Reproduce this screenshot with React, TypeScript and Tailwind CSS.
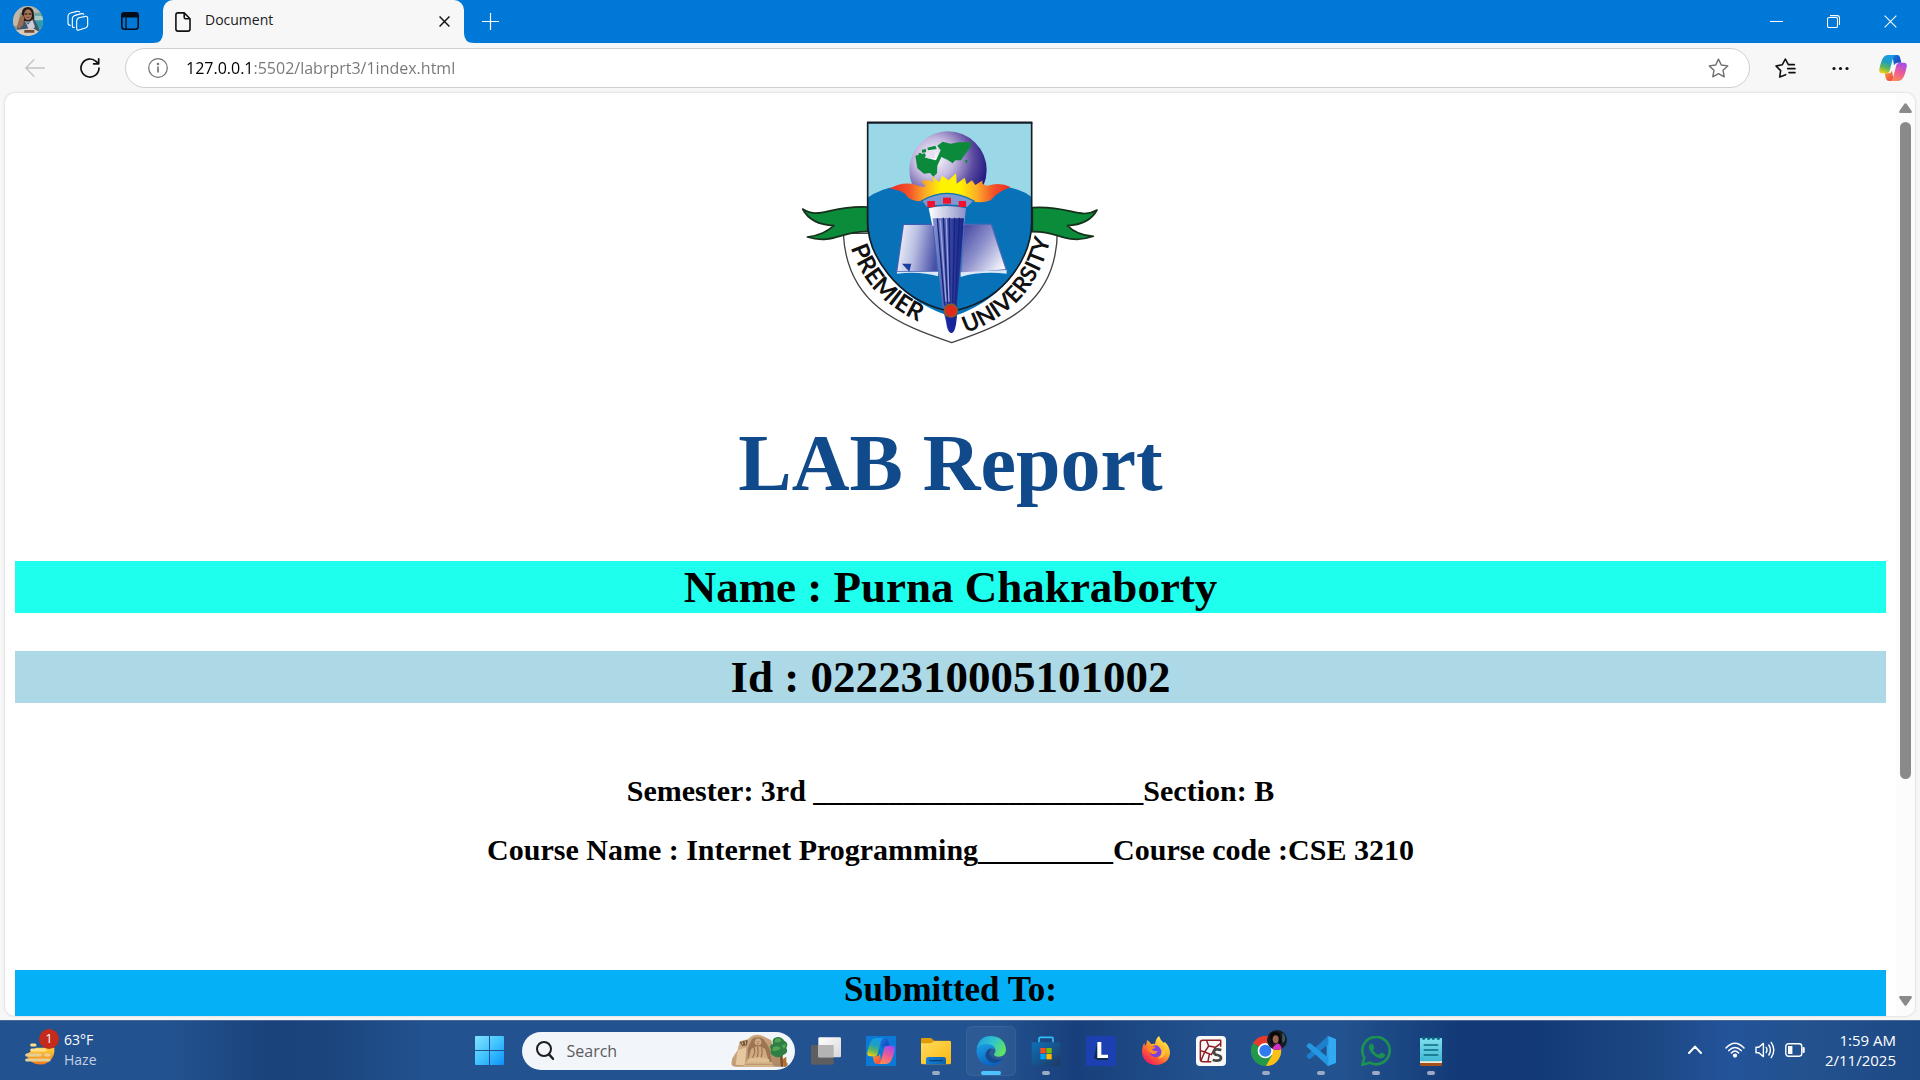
import React from "react";

const SERIF = "font-['Liberation_Serif',serif]";
const SANS = "font-['Open_Sans','Noto_Sans',sans-serif]";

function Avatar() {
  return (
    <svg width="30" height="30" viewBox="0 0 90 90" aria-hidden="true">
      <defs>
        <clipPath id="avatarClip"><circle cx="45" cy="45" r="45" /></clipPath>
      </defs>
      <g clipPath="url(#avatarClip)">
        <rect width="90" height="90" fill="#8f938c" />
        <rect width="90" height="22" fill="#b9b8ae" />
        <rect y="20" width="20" height="40" fill="#c3b8a5" />
        <path d="M58 20h32v50H62z" fill="#6fa6a4" />
        <path d="M66 30h24v12H66z" fill="#a8c9c6" />
        <path d="M70 44h20v22H70z" fill="#2e9bab" />
        <path d="M26 22Q28 3 45 3Q64 5 63 30L62 46H30z" fill="#241a1a" />
        <ellipse cx="45" cy="26" rx="12" ry="16" fill="#a5765a" />
        <path d="M35 22h8v4h-8zM47 22h8v4h-8z" fill="#3a2723" />
        <path d="M40 33q5 4 10 0" stroke="#5e2c25" strokeWidth="2" fill="none" />
        <path d="M12 66L28 44L44 52L66 42L80 72L60 84H16z" fill="#3c5871" />
        <path d="M36 44L45 56L58 40L66 64L48 72z" fill="#cfcbd6" />
        <path d="M20 34L30 26L34 36L30 58L18 68L12 60z" fill="#9b6c50" />
        <path d="M8 72L60 66L78 78L60 90H20z" fill="#d8cbbd" />
        <path d="M34 72h30v8H34z" fill="#6d4a3a" />
      </g>
    </svg>
  );
}

function WorkspacesIcon() {
  return (
    <svg width="22" height="22" viewBox="0 0 66 66" fill="none" stroke="#fff" strokeWidth="3.4" strokeLinejoin="round" strokeLinecap="round" aria-hidden="true">
      <path d="M33 24L55 19Q62 18 62 25V46Q62 51 57 53L36 60Q29 62 29 55V33Q29 26 36 23" />
      <path d="M22 52Q16 54 16 47V26Q16 19 22 17L43 11Q49 10 50 13" />
      <path d="M10 46Q3 46 3 39V18Q4 11 10 9L30 4Q36 3 38 6" />
    </svg>
  );
}

function TabActionsIcon() {
  return (
    <svg width="18" height="18" viewBox="0 0 18 18" fill="none" aria-hidden="true">
      <rect x="0.8" y="0.8" width="16.4" height="16.4" rx="2.6" stroke="#050d18" strokeWidth="1.6" />
      <path d="M1 5.6V3Q1 1 3 1h12q2 0 2 2v2.6z" fill="#050d18" />
      <path d="M5 5.5V17" stroke="#050d18" strokeWidth="1.3" />
    </svg>
  );
}

function DocIcon() {
  return (
    <svg width="16" height="20" viewBox="0 0 16 20" fill="none" stroke="#111" strokeWidth="1.6" strokeLinejoin="round" aria-hidden="true">
      <path d="M3 .9h6.2L15 6.7V17q0 2.1-2.1 2.1H3Q.9 19.1.9 17V3Q.9.9 3 .9z" />
      <path d="M9.2 1v4.2q0 1.5 1.5 1.5H15" />
    </svg>
  );
}

function Cross({ size, color, width }: { size: number; color: string; width: number }) {
  return (
    <svg width={size} height={size} viewBox="0 0 12 12" stroke={color} strokeWidth={width} aria-hidden="true">
      <path d="M.6.6l10.8 10.8M11.4.6L.6 11.4" />
    </svg>
  );
}

function Copilot({ size, id }: { size: number; id: string }) {
  const u = (n: string) => `url(#${id}${n})`;
  return (
    <svg width={size} height={size} viewBox="0 0 84 84" aria-hidden="true">
      <defs>
        <linearGradient id={id + "a"} x1=".6" y1="0" x2=".3" y2="1">
          <stop offset="0" stopColor="#159be8" /><stop offset=".4" stopColor="#1f9fbf" /><stop offset=".7" stopColor="#5fb65a" /><stop offset="1" stopColor="#f2ce12" />
        </linearGradient>
        <linearGradient id={id + "b"} x1=".7" y1="0" x2=".3" y2="1">
          <stop offset="0" stopColor="#a04cf0" /><stop offset=".45" stopColor="#e8579f" /><stop offset="1" stopColor="#fb8a56" />
        </linearGradient>
        <linearGradient id={id + "c"} x1="0" y1="0" x2="1" y2="1">
          <stop offset="0" stopColor="#1a7be0" /><stop offset="1" stopColor="#1838b8" />
        </linearGradient>
        <linearGradient id={id + "d"} x1="0" y1="0" x2="1" y2="1">
          <stop offset="0" stopColor="#f9a12c" /><stop offset="1" stopColor="#ee3d4a" />
        </linearGradient>
      </defs>
      <path d="M40 3H55Q61 3 63 10L67 26H56Q48 26 45 34z" fill={u("c")} />
      <path d="M44 81H30Q23 81 21 74L17 58H28Q36 58 39 50z" fill={u("d")} />
      <path d="M26 3H50Q44 6 42 13L32 50Q30 58 21 58H9Q-1 58 1 46Q5 24 12 12Q17 3 26 3z" fill={u("a")} />
      <path d="M58 81H34Q40 78 42 71L52 34Q54 26 63 26H75Q85 26 83 38Q79 60 72 72Q67 81 58 81z" fill={u("b")} />
    </svg>
  );
}

function UniversityCrest() {
  return (
    <svg width="320" height="250" viewBox="3 0 960 750" role="img" aria-label="Premier University crest">
      <defs>
        <radialGradient id="globe" cx=".32" cy=".35" r=".75">
          <stop offset="0" stopColor="#fff" /><stop offset=".35" stopColor="#c3b8de" /><stop offset=".68" stopColor="#5b4aa0" /><stop offset="1" stopColor="#15107c" />
        </radialGradient>
        <linearGradient id="fire" x1="0" y1="0" x2="1" y2="0">
          <stop offset="0" stopColor="#ee2a22" /><stop offset=".16" stopColor="#f3502a" /><stop offset=".3" stopColor="#fcae28" /><stop offset=".42" stopColor="#fff200" /><stop offset=".58" stopColor="#fff200" /><stop offset=".72" stopColor="#fcae28" /><stop offset=".86" stopColor="#f3502a" /><stop offset="1" stopColor="#ee2a22" />
        </linearGradient>
        <linearGradient id="pageL" x1="0" y1=".3" x2="1" y2=".5">
          <stop offset="0" stopColor="#f2f4fc" /><stop offset=".45" stopColor="#b9bfe2" /><stop offset="1" stopColor="#4a50a8" />
        </linearGradient>
        <linearGradient id="pageR" x1="0" y1="0" x2="1" y2=".8">
          <stop offset="0" stopColor="#3c3f9c" /><stop offset=".5" stopColor="#8f92cc" /><stop offset="1" stopColor="#fafaff" />
        </linearGradient>
        <linearGradient id="torch" x1="0" y1="0" x2="1" y2="0">
          <stop offset="0" stopColor="#8d97d0" /><stop offset=".4" stopColor="#4b59b0" /><stop offset=".7" stopColor="#27379a" /><stop offset="1" stopColor="#1a2489" />
        </linearGradient>
        <linearGradient id="cup" x1="0" y1="0" x2="1" y2="0">
          <stop offset="0" stopColor="#fff" /><stop offset="1" stopColor="#8a8fc8" />
        </linearGradient>
        <clipPath id="shield"><path d="M233 52H725V350C725 450 650 585 485 635C320 585 233 450 233 350z" /></clipPath>
        <path id="arcL" d="M182 428C222 545 300 622 440 672" />
        <path id="arcR" d="M528 684C655 640 752 548 784 390" />
      </defs>
      <path d="M160 385C170 600 330 660 485 713C640 660 800 600 802 380L700 380L240 385z" fill="#fff" stroke="#444" strokeWidth="4" />
      <g fill="#0a8c3a" stroke="#17301c" strokeWidth="5" strokeLinejoin="round">
        <path d="M38 312C90 345 120 300 233 306V380C160 375 130 420 52 396C90 392 110 380 132 362C90 360 55 345 38 312z" />
        <path d="M921 315C870 345 835 300 727 308V380C800 375 830 422 910 394C870 392 850 380 832 362C870 360 905 345 921 315z" />
      </g>
      <g clipPath="url(#shield)">
        <rect x="230" y="50" width="500" height="600" fill="#9ad8e8" />
        <path d="M230 280Q270 250 320 245H650Q700 255 730 280V650H230z" fill="#0872b8" />
      </g>
      <circle cx="474" cy="195" r="116" fill="url(#globe)" />
      <g fill="#0c8a3c">
        <path d="M376 152L404 145L412 160L438 166L452 136L442 122L458 110L482 116L506 112L545 112L540 128L525 148L513 166L496 166L488 175L472 164L454 156L442 182L441 205L430 215L420 204L402 206L382 190z" />
        <path d="M396 134L408 132V142L396 143zM412 128L436 122L440 132L414 136zM386 144h8v6h-8zM526 165h6v8h-6z" />
      </g>
      <path d="M404 158L436 160L434 140L414 140z" fill="#e6e0f2" />
      <path d="M298 252Q335 230 372 238Q390 248 408 244L392 228Q415 222 430 232L426 214L448 232L456 212L476 226Q490 212 498 205L500 236L524 218L530 238L546 226L556 240L578 226Q572 240 592 242Q630 230 662 246Q620 262 602 286Q575 296 545 288Q470 250 400 288Q360 292 345 266Q325 252 298 252z" fill="url(#fire)" />
      <path d="M340 358H430L443 500L320 500z" fill="url(#pageL)" stroke="#3d5fb1" strokeWidth="4" />
      <path d="M522 358H604L649 494L512 508z" fill="url(#pageR)" stroke="#4b6ab8" strokeWidth="4" />
      <path d="M320 500H445L444 514Q390 498 322 506zM512 502L650 495V506Q570 498 512 516z" fill="#dce8f6" />
      <path d="M336 476L364 476L358 500z" fill="#1d3ea0" />
      <path d="M410 308L394 288Q470 242 552 288L532 308Q470 292 410 308z" fill="#7d97d2" stroke="#0a72b0" strokeWidth="4" />
      <g fill="#f3122b"><rect x="412" y="288" width="23" height="19" /><rect x="459" y="278" width="24" height="18" /><rect x="506" y="288" width="22" height="18" /></g>
      <path d="M416 310Q470 296 528 310L522 362H427z" fill="url(#cup)" />
      <path d="M428 340H522L500 610Q498 684 484 684Q472 684 468 650L458 610z" fill="url(#torch)" />
      <path d="M466 600H502Q501 684 484 684Q468 680 466 600z" fill="#16259c" />
      <g stroke="#19247f" strokeWidth="4" fill="none">
        <path d="M442 340L464 600M460 338L473 596M478 338L480 598M494 338L488 594M508 338L496 596" />
      </g>
      <path d="M451 345L468 590M469 342L477 590" stroke="#9ba6da" strokeWidth="4" />
      <path d="M233 52V350C233 450 320 580 463 615M503 615C650 580 725 450 725 350V52" fill="none" stroke="#151c24" strokeWidth="5" />
      <circle cx="483" cy="617" r="19" fill="#e22a1c" stroke="#8b5a2b" strokeWidth="5" />
      <path d="M231 53H727" stroke="#151c24" strokeWidth="7" />
      <g fontFamily="Lato, sans-serif" fill="#111">
        <text fontSize="72"><textPath href="#arcL">PREMIER</textPath></text>
        <text fontSize="68"><textPath href="#arcR">UNIVERSITY</textPath></text>
      </g>
    </svg>
  );
}

function HazeIcon() {
  return (
    <svg width="36" height="38" viewBox="0 0 108 114" aria-hidden="true">
      <defs>
        <linearGradient id="sun" x1="0" y1="0" x2="0" y2="1"><stop offset="0" stopColor="#ffd23a" /><stop offset="1" stopColor="#ee7a1c" /></linearGradient>
      </defs>
      <path d="M10 70A43 43 0 0 0 94 62V50H40z" fill="url(#sun)" />
      <g strokeLinecap="round" strokeWidth="9" fill="none">
        <path d="M26 42H36M26 57H66" stroke="#ffe08a" />
        <path d="M11 72H52M68 72H78M11 87H78" stroke="#e7cf93" />
      </g>
    </svg>
  );
}

function StatueArt() {
  return (
    <svg width="58" height="34" viewBox="0 0 174 102" aria-hidden="true">
      <defs>
        <linearGradient id="rock" x1="0" y1="0" x2="1" y2="1"><stop offset="0" stopColor="#d9b48a" /><stop offset="1" stopColor="#a98360" /></linearGradient>
      </defs>
      <path d="M2 92Q0 76 8 66L20 48L26 22L50 16L62 6Q82-2 100 8L120 18L134 60L170 88Q172 98 160 98H14Q4 98 2 92z" fill="url(#rock)" />
      <path d="M50 96V44L62 16Q80 2 98 16L116 44L124 96z" fill="#9c7654" />
      <path d="M26 24L50 18L48 34L34 36z" fill="#6f5138" />
      <path d="M32 22l4 10M42 20l2 12" stroke="#d9b48a" strokeWidth="3" />
      <path d="M20 48L46 40L42 94L14 92z" fill="#e6c9a0" />
      <circle cx="81" cy="24" r="10" fill="#d3ac82" />
      <path d="M73 14Q81 2 89 14z" fill="#b18a64" />
      <path d="M76 23h3M83 23h3M78 29h6" stroke="#7d5a3c" strokeWidth="2" />
      <path d="M60 46Q81 28 102 46L112 76H52z" fill="#d0a97e" />
      <path d="M70 40Q76 54 64 74M80 38Q84 56 78 72M92 40Q96 56 90 72" stroke="#8c6747" strokeWidth="3" fill="none" />
      <path d="M50 76Q81 64 114 76L116 84H48z" fill="#e0be93" />
      <path d="M42 84H122L130 98H36z" fill="#d6b48a" />
      <path d="M42 91H126" stroke="#a98560" strokeWidth="2" />
      <path d="M146 60L150 98H156L155 60z" fill="#7e4d26" />
      <path d="M154 76l12-8v30h-6z" fill="#b06f2e" />
      <path d="M130 12Q148 4 160 20Q174 26 166 42Q174 56 158 62Q146 74 132 68Q114 62 120 46Q112 34 126 30Q122 18 130 12z" fill="#2f7f45" />
      <path d="M134 14Q146 10 152 20Q142 28 130 24zM126 40Q140 32 150 42Q140 54 124 50zM152 34l12-4q2 10-6 14z" fill="#55a554" />
    </svg>
  );
}

function StartIcon() {
  return (
    <svg width="29" height="29" viewBox="0 0 29 29" aria-hidden="true">
      <defs><linearGradient id="win" gradientUnits="userSpaceOnUse" x1="0" y1="0" x2="29" y2="29"><stop offset="0" stopColor="#84e1ff" /><stop offset=".5" stopColor="#41c3ff" /><stop offset="1" stopColor="#0a93f8" /></linearGradient></defs>
      <path d="M1 0h13v14H0V1q0-1 1-1zM15 0h13q1 0 1 1v13H15zM0 15h14v14H1q-1 0-1-1zM15 15h14v13q0 1-1 1H15z" fill="url(#win)" />
    </svg>
  );
}

function TaskViewIcon() {
  return (
    <svg width="30" height="30" viewBox="0 0 90 90" aria-hidden="true">
      <defs><linearGradient id="tv" x1="0" y1="0" x2="1" y2="1"><stop offset="0" stopColor="#fff" /><stop offset="1" stopColor="#d8d8d8" /></linearGradient></defs>
      <rect y="27" width="68" height="59" rx="4" fill="#5e5e60" />
      <rect x="22" y="4" width="68" height="60" rx="4" fill="url(#tv)" />
      <rect x="22" y="27" width="46" height="37" fill="#b4b4b4" />
    </svg>
  );
}

function CopilotTile() {
  return <span className="flex size-[30px] items-center justify-center bg-[#0b7ad6]"><Copilot size={28} id="tile" /></span>;
}

function ExplorerIcon() {
  return (
    <svg width="30" height="30" viewBox="0 0 90 90" aria-hidden="true">
      <defs>
        <linearGradient id="fold" x1="0" y1="0" x2="1" y2="1"><stop offset="0" stopColor="#ffdc5e" /><stop offset="1" stopColor="#fbb70f" /></linearGradient>
        <linearGradient id="foldBlue" x1="0" y1="0" x2="1" y2="0"><stop offset="0" stopColor="#1180d8" /><stop offset="1" stopColor="#0f63b0" /></linearGradient>
      </defs>
      <path d="M0 10Q0 6 4 6H30L40 14H86Q90 14 90 20V40H0z" fill="#e09c06" />
      <path d="M0 22H30L40 15H86Q90 15 90 20V80Q90 85 85 85H5Q0 85 0 80z" fill="url(#fold)" />
      <path d="M15 85V70Q15 63 22 63H68Q75 63 75 70V85z" fill="url(#foldBlue)" />
      <path d="M26 74H64" stroke="#0b4379" strokeWidth="4" strokeLinecap="round" />
    </svg>
  );
}

function EdgeIcon() {
  return (
    <svg width="30" height="30" viewBox="0 0 90 90" aria-hidden="true">
      <defs>
        <linearGradient id="edgeTop" x1="0" y1=".2" x2="1" y2=".6"><stop offset="0" stopColor="#1d9fdc" /><stop offset=".5" stopColor="#2fc3cf" /><stop offset="1" stopColor="#62e45e" /></linearGradient>
        <linearGradient id="edgeBody" x1="0" y1="0" x2=".4" y2="1"><stop offset="0" stopColor="#1aa0e6" /><stop offset="1" stopColor="#0c62bd" /></linearGradient>
      </defs>
      <path d="M2 38Q8 0 46 0Q88 4 90 42Q88 62 68 62Q54 62 54 54Q60 48 58 40Q54 26 36 26Q14 26 2 38z" fill="url(#edgeTop)" />
      <path d="M1 42Q10 24 32 24Q54 26 57 42Q48 34 38 40Q28 48 34 62Q44 78 66 74Q76 72 83 67Q72 90 45 90Q4 88 1 42z" fill="url(#edgeBody)" />
      <path d="M33 44Q24 56 32 68Q40 80 58 80Q74 78 83 67Q74 72 62 70Q42 66 40 52Q40 42 46 37Q38 38 33 44z" fill="#164a8c" />
    </svg>
  );
}

function StoreIcon() {
  return (
    <svg width="30" height="30" viewBox="0 0 90 90" aria-hidden="true">
      <defs><linearGradient id="store" x1="0" y1="0" x2="1" y2="1"><stop offset="0" stopColor="#0e70b8" /><stop offset="1" stopColor="#1f3763" /></linearGradient></defs>
      <path d="M24 20V8Q24 4 28 4H62Q66 4 66 8V20" fill="none" stroke="#34bdf5" strokeWidth="5" />
      <path d="M2 19H88V80Q88 90 78 90H12Q2 90 2 80z" fill="url(#store)" />
      <path d="M28 36h16v16H28z" fill="#f25022" /><path d="M46 36h16v16H46z" fill="#7fba00" />
      <path d="M28 54h16v16H28z" fill="#00a4ef" /><path d="M46 54h16v16H46z" fill="#ffb900" />
    </svg>
  );
}

function LTile() {
  return (
    <svg width="30" height="30" viewBox="0 0 90 90" aria-hidden="true">
      <rect width="90" height="90" fill="#1c3fb2" />
      <path d="M34 18L24 66L34 72H66V66H34z" fill="#0c2c4e" />
      <path d="M34 18H46V56H66V66H34z" fill="#fff" />
    </svg>
  );
}

function FirefoxIcon() {
  return (
    <svg width="30" height="30" viewBox="0 0 90 90" aria-hidden="true">
      <defs>
        <linearGradient id="ffx" x1=".85" y1=".1" x2=".2" y2="1"><stop offset="0" stopColor="#fff04a" /><stop offset=".35" stopColor="#ffb02c" /><stop offset=".7" stopColor="#ff5038" /><stop offset="1" stopColor="#e8156d" /></linearGradient>
      </defs>
      <path d="M54 0Q58 12 68 20L72 18Q88 34 87 52Q82 86 45 87Q8 84 3 50Q3 30 10 20L12 30Q18 24 18 12Q26 16 30 24Q38 22 42 24Q44 8 54 0z" fill="url(#ffx)" />
      <circle cx="44" cy="46" r="18" fill="#7a42e4" />
      <path d="M20 30Q34 28 44 34Q38 40 32 40Q38 48 50 44Q46 56 34 54Q20 48 20 30z" fill="#ff8a22" />
      <path d="M48 26Q62 32 64 46Q70 40 64 28Q70 32 74 44Q74 66 50 68Q64 60 62 46Q58 34 48 26z" fill="#ffc531" />
    </svg>
  );
}

function SpyderIcon() {
  return (
    <svg width="30" height="30" viewBox="0 0 90 90" aria-hidden="true">
      <rect width="90" height="90" rx="12" fill="#f8f8f8" />
      <g fill="none" stroke="#8f1d22" strokeWidth="4.4" strokeLinejoin="round">
        <path d="M46 77H20Q13 77 13 70V20Q13 13 20 13H74V32" />
        <path d="M32 14L38 30L58 34L74 22M38 30L26 48L13 44M26 48L46 56L58 34M26 48L14 76M40 54L36 76M58 34V44" />
      </g>
      <path d="M76 42Q54 36 54 48Q54 56 64 57Q76 59 75 67Q72 77 50 72" fill="none" stroke="#454545" strokeWidth="8" />
    </svg>
  );
}

function ChromeIcon() {
  return (
    <svg width="36" height="36" viewBox="0 0 108 108" aria-hidden="true">
      <defs><clipPath id="mini"><circle cx="78" cy="30" r="30" /></clipPath></defs>
      <path d="M45 63L6 40A45 45 0 0 1 84 40z" fill="#e33b2e" />
      <path d="M45 63L45 108A45 45 0 0 1 6 40z" fill="#22994a" />
      <path d="M45 63L84 40A45 45 0 0 1 45 108z" fill="#fbc116" />
      <path d="M45 41H86L64 75z" fill="#fbc116" />
      <path d="M6 40L26 74L45 63z" fill="#22994a" />
      <path d="M6 40A45 45 0 0 1 84 41H45z" fill="#e33b2e" />
      <path d="M64 74L45 108L38 84z" fill="#22994a" />
      <circle cx="43" cy="62" r="23" fill="#fff" />
      <circle cx="43" cy="62" r="18" fill="#2f7cf0" />
      <g clipPath="url(#mini)">
        <rect x="48" width="60" height="60" fill="#171c20" />
        <path d="M58 12Q70 0 86 10L92 40H60z" fill="#0a0808" />
        <ellipse cx="74" cy="28" rx="9" ry="12" fill="#9c6450" />
        <path d="M94 8q10 8 8 24l-8 8z" fill="#3f5a60" />
        <path d="M62 60Q70 44 80 40Q90 44 94 60z" fill="#d82ec8" />
      </g>
    </svg>
  );
}

function VsCodeIcon() {
  return (
    <svg width="30" height="30" viewBox="0 0 90 90" aria-hidden="true">
      <path d="M66 0L90 10V80L66 90L62 86V4z" fill="#2ba3ec" />
      <path d="M66 0L4 56Q0 60 3 63L8 68Q11 70 15 67L68 24z" fill="#1c80cc" />
      <path d="M66 90L4 34Q0 30 3 27L8 22Q11 20 15 23L68 66z" fill="#2497e2" />
      <path d="M66 0L90 10V80L66 90Q70 88 68 80V10Q70 2 66 0z" fill="#33a9f2" />
    </svg>
  );
}

function WhatsAppIcon() {
  return (
    <svg width="30" height="30" viewBox="0 0 90 90" aria-hidden="true">
      <path d="M4 86L10 65A41 41 0 1 1 26 80z" fill="none" stroke="#1d9150" strokeWidth="8" strokeLinejoin="round" />
      <path d="M30 23Q34 22 36 25L40 35Q41 37 36 42Q42 53 53 57L59 51Q61 49 63 50L72 55Q73 65 62 67Q52 68 38 57Q22 42 23 32Q24 25 30 23z" fill="#1d9150" />
    </svg>
  );
}

function NotepadIcon() {
  return (
    <svg width="24" height="30" viewBox="0 0 72 90" aria-hidden="true">
      <defs><linearGradient id="note" x1="0" y1="0" x2="0" y2="1"><stop offset="0" stopColor="#7fe0ee" /><stop offset="1" stopColor="#3fb7d2" /></linearGradient></defs>
      <rect x="3" y="76" width="66" height="14" rx="3" fill="#a3501a" />
      <rect x="3" y="70" width="66" height="11" fill="#f0e9e0" />
      <rect x="3" y="6" width="66" height="70" rx="3" fill="url(#note)" />
      <path d="M16 27H56M16 42H56M16 57H56" stroke="#0b6a83" strokeWidth="5" strokeLinecap="round" />
      <g fill="#0b6a83"><circle cx="14" cy="7" r="5" /><circle cx="29" cy="7" r="5" /><circle cx="43" cy="7" r="5" /><circle cx="58" cy="7" r="5" /></g>
    </svg>
  );
}

const apps = [
  { name: "Task view", icon: <TaskViewIcon />, running: false },
  { name: "Copilot", icon: <CopilotTile />, running: false },
  { name: "File Explorer", icon: <ExplorerIcon />, running: true },
  { name: "Microsoft Edge", icon: <EdgeIcon />, running: true, active: true },
  { name: "Microsoft Store", icon: <StoreIcon />, running: true },
  { name: "L", icon: <LTile />, running: false },
  { name: "Firefox", icon: <FirefoxIcon />, running: false },
  { name: "Spyder", icon: <SpyderIcon />, running: false },
  { name: "Chrome", icon: <span className="-mt-[6px] -mr-[6px]"><ChromeIcon /></span>, running: true },
  { name: "Visual Studio Code", icon: <VsCodeIcon />, running: true },
  { name: "WhatsApp", icon: <WhatsAppIcon />, running: true },
  { name: "Notepad", icon: <NotepadIcon />, running: true },
];

function TitleBar() {
  return (
    <header className="flex h-[43px] shrink-0 items-center justify-between bg-[#0078d7]">
      <div className="flex h-full">
        <div className="flex items-center pr-6 pb-px pl-[13px]">
          <button aria-label="Profile" className="flex"><Avatar /></button>
          <button aria-label="Workspaces" className="ml-6 flex"><WorkspacesIcon /></button>
          <button aria-label="Tab actions" className="ml-8 flex"><TabActionsIcon /></button>
        </div>
        <div className="relative flex w-[301px] items-center rounded-t-[10px] bg-[#f7f7f7] pr-[14px] pl-3">
          <svg className="absolute bottom-0 -left-[10px]" width="10" height="10" viewBox="0 0 10 10" aria-hidden="true">
            <path d="M0 10Q10 10 10 0V10z" fill="#f7f7f7" />
          </svg>
          <svg className="absolute -right-[10px] bottom-0" width="10" height="10" viewBox="0 0 10 10" aria-hidden="true">
            <path d="M10 10Q0 10 0 0V10z" fill="#f7f7f7" />
          </svg>
          <DocIcon />
          <span className="ml-[14px] flex-1 pb-[3px] text-[14px] leading-5 text-[#1b1b1b]">Document</span>
          <button aria-label="Close tab" className="flex"><Cross size={11} color="#111" width={1.6} /></button>
        </div>
        <button aria-label="New tab" className="ml-[18px] flex items-center pb-px">
          <svg width="17" height="17" viewBox="0 0 17 17" stroke="#fff" strokeWidth="1.2" aria-hidden="true"><path d="M8.5 0v17M0 8.5h17" /></svg>
        </button>
      </div>
      <div className="flex h-full items-center gap-[44px] pr-[23px]">
        <button aria-label="Minimize"><svg width="13" height="13" viewBox="0 0 13 13" stroke="#fff" strokeWidth="1" aria-hidden="true"><path d="M0 6.5h13" /></svg></button>
        <button aria-label="Restore"><svg width="13" height="13" viewBox="0 0 13 13" fill="none" stroke="#fff" strokeWidth="1.1" aria-hidden="true"><rect x=".5" y="2.5" width="10" height="10" rx="1.6" /><path d="M3 .6h7.2q2.3 0 2.3 2.3V10" /></svg></button>
        <button aria-label="Close window"><Cross size={13} color="#fff" width={1} /></button>
      </div>
    </header>
  );
}

function AddressBar() {
  return (
    <div className="flex h-[50px] shrink-0 items-center pr-[13px] pl-[25px]">
      <button aria-label="Back" className="flex">
        <svg width="20" height="18" viewBox="0 0 20 18" fill="none" stroke="#c4c4c4" strokeWidth="1.3" strokeLinecap="round" strokeLinejoin="round" aria-hidden="true"><path d="M19.4 9H1M9 .8L.8 9L9 17.2" /></svg>
      </button>
      <button aria-label="Refresh" className="ml-[35px] flex">
        <svg width="20" height="20" viewBox="0 0 20 20" fill="none" stroke="#111" strokeWidth="1.7" strokeLinecap="round" strokeLinejoin="round" aria-hidden="true"><path d="M19 10A9 9 0 1 1 16 3.3L18.4 5.6M18.7 .9V5.8H13.6" /></svg>
      </button>
      <div className="ml-[25px] flex h-10 flex-1 items-center rounded-full border border-[#cfcfcf] bg-white pr-5 pl-[22px]">
        <svg width="20" height="20" viewBox="0 0 20 20" fill="none" stroke="#6f6f6f" strokeWidth="1.2" aria-hidden="true"><circle cx="10" cy="10" r="9.3" /><path d="M10 8.6V14.4" strokeWidth="1.6" /><circle cx="10" cy="6" r=".6" fill="#6f6f6f" /></svg>
        <input
          aria-label="Address"
          defaultValue="127.0.0.1:5502/labrprt3/1index.html"
          className="ml-[18px] flex-1 bg-[linear-gradient(to_right,#000_68px,#767676_68px)] bg-clip-text text-[16px] leading-6 text-transparent outline-none"
        />
        <button aria-label="Add to favorites" className="flex">
          <svg width="21" height="20" viewBox="0 0 24 23" fill="none" stroke="#6f6f6f" strokeWidth="1.6" strokeLinejoin="round" aria-hidden="true"><path d="M12 1.3l3.2 6.8 7.4 1-5.4 5.1 1.4 7.4L12 18l-6.6 3.6 1.4-7.4L1.4 9.1l7.4-1z" /></svg>
        </button>
      </div>
      <button aria-label="Favorites" className="ml-[25px] flex">
        <svg width="21" height="20" viewBox="0 0 63 60" fill="none" stroke="#111" strokeWidth="4.8" strokeLinecap="round" strokeLinejoin="round" aria-hidden="true"><path d="M32 50L14 57L17 38L3 24L22 20L31 3L40 20H58M38 32H60M42 44H60" /></svg>
      </button>
      <button aria-label="Settings and more" className="ml-9 flex">
        <svg width="17" height="5" viewBox="0 0 17 5" fill="#111" aria-hidden="true"><circle cx="2" cy="2.5" r="1.6" /><circle cx="8.5" cy="2.5" r="1.6" /><circle cx="15" cy="2.5" r="1.6" /></svg>
      </button>
      <button aria-label="Copilot" className="ml-[30px] flex"><Copilot size={28} id="bar" /></button>
    </div>
  );
}

function Page() {
  return (
    <div className="flex min-h-0 flex-1 bg-[#f7f7f7] px-[5px] pb-1">
      <div className="flex min-h-0 flex-1 overflow-hidden rounded-[10px] bg-white shadow-[0_0_2px_1px_#e2e2e2]">
        <main className={`${SERIF} min-w-0 flex-1 overflow-hidden px-[10px] pt-3 text-center font-bold text-black`}>
          <div className="flex justify-center"><UniversityCrest /></div>
          <h1 className="mt-[62px] text-[80px] leading-[92px] text-[#104a8b]">LAB Report</h1>
          <h2 className="mt-[52px] bg-[#1fffee] text-[45px] leading-[52px]">Name : Purna Chakraborty</h2>
          <h2 className="mt-[38px] bg-[#add8e6] text-[45px] leading-[52px]">Id : 0222310005101002</h2>
          <h3 className="mt-[71px] text-[30px] leading-[34px]">Semester: 3rd ______________________Section: B</h3>
          <h3 className="mt-[25px] text-[30px] leading-[34px]">Course Name : Internet Programming_________Course code :CSE 3210</h3>
          <h2 className="mt-[103px] bg-[#05b0f7] pb-4 text-[35px] leading-10">Submitted To:</h2>
        </main>
        <div className="flex w-[19px] flex-col items-center bg-[#fcfcfc] py-[10px]" aria-hidden="true">
          <svg width="13" height="10" viewBox="0 0 13 10"><path d="M5.4.8q1.1-1.3 2.2 0l5 7.2q.8 2-1 2H1.4q-1.8 0-1-2z" fill="#8a8a8a" /></svg>
          <div className="flex min-h-0 w-[11px] flex-1 flex-col py-[9px]">
            <div className="h-[76%] w-full rounded-full bg-[#8a8a8a]" />
          </div>
          <svg width="13" height="10" viewBox="0 0 13 10"><path d="M5.4 9.2q1.1 1.3 2.2 0l5-7.2q.8-2-1-2H1.4q-1.8 0-1 2z" fill="#8a8a8a" /></svg>
        </div>
      </div>
    </div>
  );
}

function Taskbar() {
  return (
    <footer className="grid h-[60px] shrink-0 grid-cols-[1fr_auto_1fr] items-center border-t border-[#4a6a94] bg-[linear-gradient(to_right,#22528f_0%,#22528f_9%,#1a427b_14%,#1b447d_17%,#22528f_22%,#22528f_52%,#183f7b_56%,#1b4580_58%,#22528f_63%,#22528f_70%,#133a76_76%,#133a76_80%,#1c4783_86%,#23539a_90%,#23528f_94%,#1d4984_100%)]">
      <button className="flex items-center justify-self-start pb-[2px] pl-[23px] text-left">
        <span className="relative flex">
          <HazeIcon />
          <span className="absolute -top-[2px] left-4 flex size-5 items-center justify-center rounded-full bg-[#c42b1c] text-[13px] leading-none text-white">1</span>
        </span>
        <span className="ml-[5px] text-[14px] leading-5 text-white">
          <span className="block">63°F</span>
          <span className="block text-[#c3d0e4]">Haze</span>
        </span>
      </button>
      <div className="flex h-[59px] items-center">
        <button aria-label="Start" className="flex w-[55px] justify-center"><StartIcon /></button>
        <label className="mr-1 ml-[5px] flex h-[38px] w-[273px] items-center rounded-full bg-[#f2f5fa] pr-[6px] pl-[14px]">
          <svg width="18" height="19" viewBox="0 0 18 19" fill="none" stroke="#1c1c1c" strokeWidth="2" strokeLinecap="round" aria-hidden="true"><circle cx="8" cy="8" r="7" /><path d="M13 13.4l4 4.4" strokeWidth="2.4" /></svg>
          <input aria-label="Search" placeholder="Search" className="ml-[13px] w-0 flex-1 bg-transparent text-[16px] leading-6 outline-none placeholder:text-[#5c5c5c]" />
          <StatueArt />
        </label>
        {apps.map((app) => (
          <button key={app.name} aria-label={app.name} className="flex h-full w-[55px] items-center justify-center">
            <span className={app.active ? "relative flex size-[50px] items-center justify-center rounded-md border border-white/5 bg-white/5" : "relative flex size-[50px] items-center justify-center"}>
              {app.icon}
              {app.running && <span className={app.active ? "absolute bottom-0 h-1 w-5 rounded-full bg-[#4cc2ff]" : "absolute bottom-px h-1 w-2 rounded-full bg-[#9cabc4]"} />}
            </span>
          </button>
        ))}
      </div>
      <div className="flex items-center justify-self-end pr-6 pb-[2px] text-white">
        <button aria-label="Show hidden icons" className="flex"><svg width="14" height="9" viewBox="0 0 14 9" fill="none" stroke="#fff" strokeWidth="2" strokeLinecap="round" strokeLinejoin="round" aria-hidden="true"><path d="M1 8l6-6.4L13 8" /></svg></button>
        <button aria-label="Network, sound and battery" className="ml-[23px] flex items-center gap-[10px]">
          <svg width="20" height="16" viewBox="0 0 20 16" fill="none" stroke="#fff" strokeWidth="1.5" strokeLinecap="round" aria-hidden="true"><path d="M1 6Q10-3.6 19 6M3.8 8.6Q10 2.2 16.2 8.6M6.4 11Q10 7.2 13.6 11" /><circle cx="10" cy="13.6" r="1.4" fill="#fff" /></svg>
          <svg width="20" height="18" viewBox="0 0 20 18" fill="none" stroke="#fff" strokeWidth="1.4" strokeLinecap="round" strokeLinejoin="round" aria-hidden="true"><path d="M1 6.2h2.8L8.4 2.4v13.2L3.8 11.8H1zM11.2 6.4Q12.8 9 11.2 11.6M13.8 4Q17 9 13.8 14M16.2 1.4Q21.4 9 16.2 16.6" /></svg>
          <svg width="20" height="14" viewBox="0 0 20 14" fill="none" stroke="#fff" strokeWidth="1.4" aria-hidden="true"><rect x=".8" y=".8" width="16" height="12.4" rx="2.6" /><rect x="3" y="3" width="4.4" height="8" fill="#fff" stroke="none" /><path d="M18.6 5v4" strokeWidth="2.2" strokeLinecap="round" /></svg>
        </button>
        <button className="ml-5 text-right text-[15px] leading-5">
          <span className="block">1:59 AM</span>
          <span className="block">2/11/2025</span>
        </button>
      </div>
    </footer>
  );
}

export default function App() {
  return (
    <div className={`${SANS} flex h-screen flex-col overflow-hidden bg-[#f7f7f7]`}>
      <TitleBar />
      <AddressBar />
      <Page />
      <Taskbar />
    </div>
  );
}
